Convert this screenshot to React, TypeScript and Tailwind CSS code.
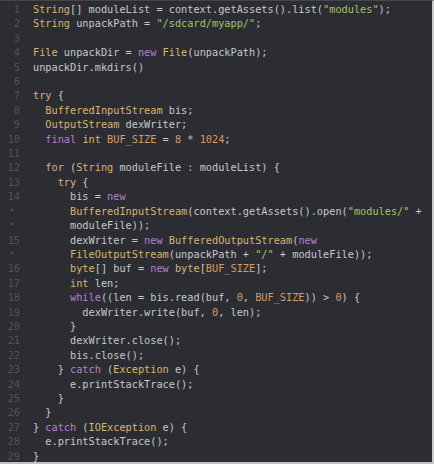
import React from "react";

type Tok = [string, string?];

const T = "text-[#d9b46f]"; // types / yellow
const K = "text-[#b57fcf]"; // purple keyword
const S = "text-[#a3c26a]"; // strings
const N = "text-[#d69a62]"; // numbers / constants

type Row = { n: string; toks: Tok[] };

const rows: Row[] = [
  { n: "1", toks: [["String", T], ["[] moduleList = context.getAssets().list("], ['"modules"', S], [");"]] },
  { n: "2", toks: [["String", T], [" unpackPath = "], ['"/sdcard/myapp/"', S], [";"]] },
  { n: "3", toks: [] },
  { n: "4", toks: [["File", T], [" unpackDir = "], ["new", K], [" "], ["File", T], ["(unpackPath);"]] },
  { n: "5", toks: [["unpackDir.mkdirs()"]] },
  { n: "6", toks: [] },
  { n: "7", toks: [["try", T], [" {"]] },
  { n: "8", toks: [["  "], ["BufferedInputStream", T], [" bis;"]] },
  { n: "9", toks: [["  "], ["OutputStream", T], [" dexWriter;"]] },
  { n: "10", toks: [["  "], ["final", K], [" "], ["int", T], [" "], ["BUF_SIZE", N], [" = "], ["8", N], [" * "], ["1024", N], [";"]] },
  { n: "11", toks: [] },
  { n: "12", toks: [["  "], ["for", T], [" ("], ["String", T], [" moduleFile : moduleList) {"]] },
  { n: "13", toks: [["    "], ["try", T], [" {"]] },
  { n: "14", toks: [["      bis = "], ["new", K]] },
  { n: "•", toks: [["      "], ["BufferedInputStream", T], ["(context.getAssets().open("], ['"modules/"', S], [" +"]] },
  { n: "•", toks: [["      moduleFile));"]] },
  { n: "15", toks: [["      dexWriter = "], ["new", K], [" "], ["BufferedOutputStream", T], ["("], ["new", K]] },
  { n: "•", toks: [["      "], ["FileOutputStream", T], ["(unpackPath + "], ['"/"', S], [" + moduleFile));"]] },
  { n: "16", toks: [["      "], ["byte", T], ["[] buf = "], ["new", K], [" "], ["byte", T], ["["], ["BUF_SIZE", N], ["];"]] },
  { n: "17", toks: [["      "], ["int", T], [" len;"]] },
  { n: "18", toks: [["      "], ["while", K], ["((len = bis.read(buf, "], ["0", N], [", "], ["BUF_SIZE", N], [")) > "], ["0", N], [") {"]] },
  { n: "19", toks: [["        dexWriter.write(buf, "], ["0", N], [", len);"]] },
  { n: "20", toks: [["      }"]] },
  { n: "21", toks: [["      dexWriter.close();"]] },
  { n: "22", toks: [["      bis.close();"]] },
  { n: "23", toks: [["    } "], ["catch", K], [" ("], ["Exception", T], [" e) {"]] },
  { n: "24", toks: [["      e.printStackTrace();"]] },
  { n: "25", toks: [["    }"]] },
  { n: "26", toks: [["  }"]] },
  { n: "27", toks: [["} "], ["catch", K], [" ("], ["IOException", T], [" e) {"]] },
  { n: "28", toks: [["  e.printStackTrace();"]] },
  { n: "29", toks: [["}"]] },
];

export default function App() {
  return (
    <div
      className="w-[434px] h-[464px] bg-[#2b2d33] border-t border-t-[#44464c] border-r-2 border-r-[#c9cacc] border-b-2 border-b-[#bfc0c2] overflow-hidden text-[10.25px] leading-[14.42px] text-[#c6c8c9] pt-[1px]"
      style={{ fontFamily: '"DejaVu Sans Mono", monospace' }}
    >
      {rows.map((r, i) => (
        <div key={i} className="flex h-[14.42px] whitespace-pre">
          {r.n === "•" ? (
            <div className="w-[24px] shrink-0 text-center text-[#50535b] text-[8px]">•</div>
          ) : (
            <div className="w-[24px] shrink-0 text-right pr-[4px] text-[#4f525a]">{r.n}</div>
          )}
          <div className="ml-[9px]">
            {r.toks.map((t, j) =>
              t[1] ? (
                <span key={j} className={t[1]}>
                  {t[0]}
                </span>
              ) : (
                <span key={j}>{t[0]}</span>
              )
            )}
          </div>
        </div>
      ))}
    </div>
  );
}
